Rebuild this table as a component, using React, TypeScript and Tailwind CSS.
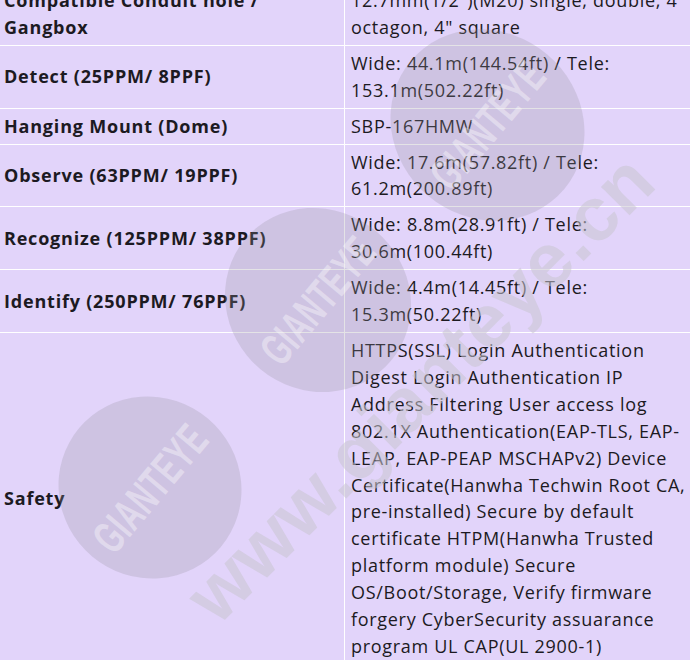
import React from "react";

type Row = { label: string[]; value: string[] };

const rows: Row[] = [
  {
    label: ["Compatible Conduit hole /", "Gangbox"],
    value: ['12.7mm(1/2")(M20) single, double, 4', 'octagon, 4" square'],
  },
  {
    label: ["Detect (25PPM/ 8PPF)"],
    value: ["Wide: 44.1m(144.54ft) / Tele:", "153.1m(502.22ft)"],
  },
  { label: ["Hanging Mount (Dome)"], value: ["SBP-167HMW"] },
  {
    label: ["Observe (63PPM/ 19PPF)"],
    value: ["Wide: 17.6m(57.82ft) / Tele:", "61.2m(200.89ft)"],
  },
  {
    label: ["Recognize (125PPM/ 38PPF)"],
    value: ["Wide: 8.8m(28.91ft) / Tele:", "30.6m(100.44ft)"],
  },
  {
    label: ["Identify (250PPM/ 76PPF)"],
    value: ["Wide: 4.4m(14.45ft) / Tele:", "15.3m(50.22ft)"],
  },
  {
    label: ["Safety"],
    value: [
      "HTTPS(SSL) Login Authentication",
      "Digest Login Authentication IP",
      "Address Filtering User access log",
      "802.1X Authentication(EAP-TLS, EAP-",
      "LEAP, EAP-PEAP MSCHAPv2) Device",
      "Certificate(Hanwha Techwin Root CA,",
      "pre-installed) Secure by default",
      "certificate HTPM(Hanwha Trusted",
      "platform module) Secure",
      "OS/Boot/Storage, Verify firmware",
      "forgery CyberSecurity assuarance",
      "program UL CAP(UL 2900-1)",
    ],
  },
];

function Lines({ lines }: { lines: string[] }) {
  return (
    <>
      {lines.map((l, i) => (
        <span key={i} className="block whitespace-nowrap">
          {l}
        </span>
      ))}
    </>
  );
}

function Oval({ className }: { className: string }) {
  return (
    <div
      className={`absolute flex items-center justify-center rounded-[50%] bg-[rgba(150,146,160,0.26)] ${className}`}
    >
      <span className="scale-x-[0.62] text-[46px] font-bold leading-none tracking-[1px] text-[rgba(255,255,255,0.38)] [font-family:'Liberation_Sans',Arial,sans-serif]">
        GIANTEYE
      </span>
    </div>
  );
}

export default function App() {
  return (
    <div className="relative h-[660px] w-[690px] overflow-hidden bg-[#e2d4fa] text-[18px] leading-[26.9px] tracking-[0.7px] text-[#1c1a22] [font-family:'Open_Sans','Noto_Sans',sans-serif]">
      <div className="-mt-[17px] grid grid-cols-[345px_1fr]">
        {rows.map((r, i) => (
          <React.Fragment key={i}>
            <div className="flex items-center border-b border-r border-white py-[4px] pl-[4px] font-bold tracking-[0.8px]">
              <div>
                <Lines lines={r.label} />
              </div>
            </div>
            <div className="border-b border-white py-[4px] pl-[6px]">
              <Lines lines={r.value} />
            </div>
          </React.Fragment>
        ))}
      </div>

      <div className="pointer-events-none absolute inset-0">
        <Oval className="left-[395px] top-[25px] h-[200px] w-[185px] -rotate-[50deg]" />
        <Oval className="left-[228px] top-[205px] h-[190px] w-[180px] -rotate-[50deg]" />
        <Oval className="left-[60px] top-[395px] h-[185px] w-[180px] -rotate-[50deg]" />
        <div className="absolute left-[120px] top-[350px] flex w-[600px] -rotate-[45deg] items-center justify-center">
          <span className="text-[76px] font-bold leading-none text-[rgba(200,196,208,0.55)] [font-family:'Liberation_Sans',Arial,sans-serif]">
            www.gianteye.cn
          </span>
        </div>
      </div>
    </div>
  );
}
